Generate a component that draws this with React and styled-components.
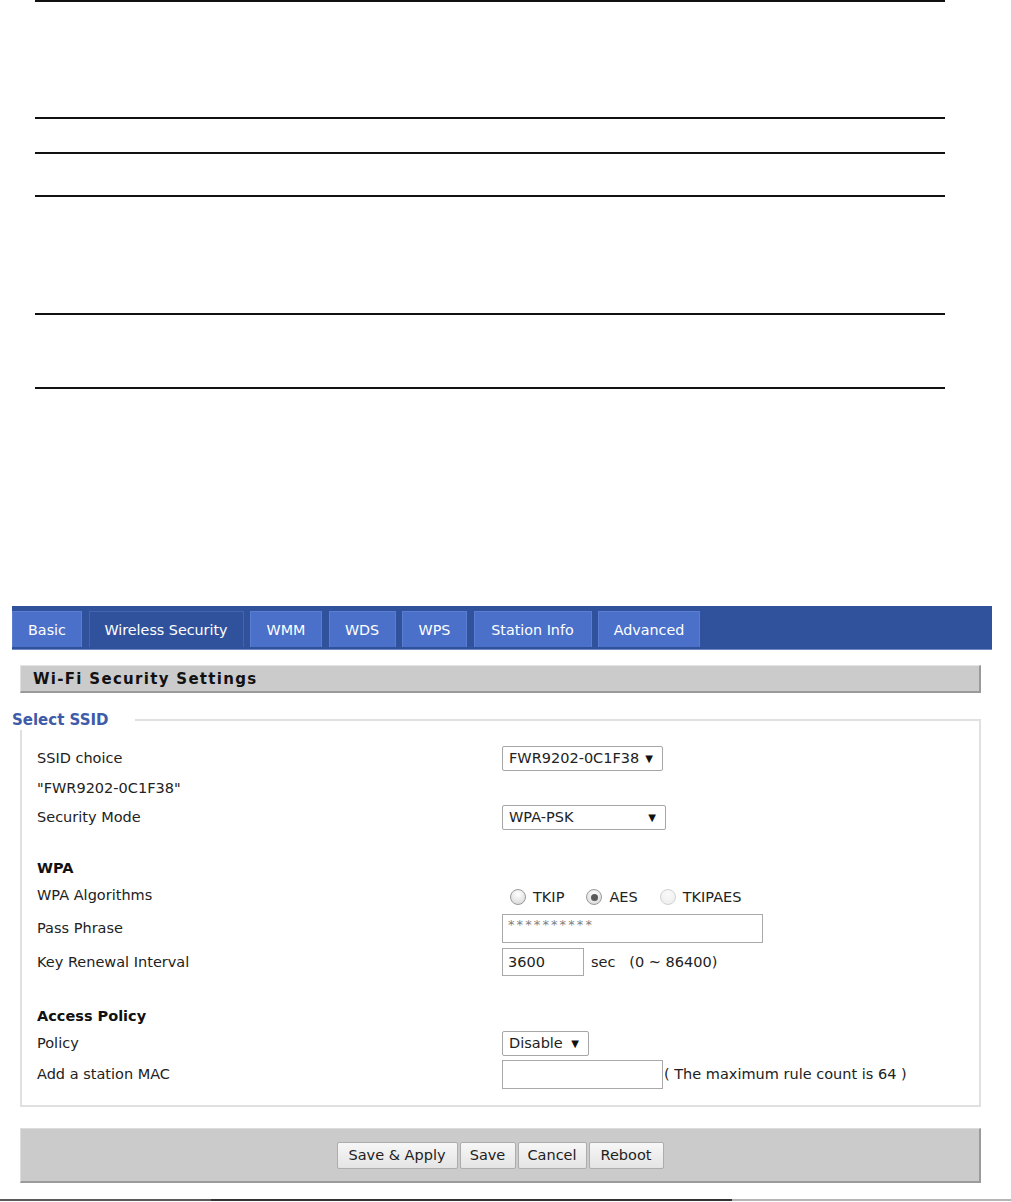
import React from 'react'
import styled, { createGlobalStyle } from 'styled-components'

const GlobalStyle = createGlobalStyle`
  body {
    margin: 0;
    background: #fff;
    font-family: "DejaVu Sans", Tahoma, sans-serif;
    color: #222;
  }
`

const Page = styled.div`
  width: 1011px;
  height: 1202px;
  overflow: hidden;
`

const Rules = styled.div`
  margin-left: 35px;
  width: 910px;
`

const Rule = styled.div`
  box-sizing: border-box;
  height: ${({ $h }) => $h}px;
  border-top: 2px solid #111;
  border-bottom: ${({ $last }) => ($last ? '2px solid #111' : 'none')};
`

const TabBar = styled.div`
  box-sizing: border-box;
  margin: 217px 0 0 12px;
  width: 980px;
  height: 44px;
  padding-top: 5px;
  background: #30529d;
  border-bottom: 1px solid #7187c2;
  display: flex;
  gap: 6.5px;
`

const Tab = styled.div`
  box-sizing: border-box;
  width: ${({ $w }) => $w}px;
  height: 36px;
  display: flex;
  align-items: center;
  justify-content: center;
  font-size: 14.3px;
  color: #fff;
  background: ${({ $active }) => ($active ? '#30529d' : '#4a70c9')};
  border: 1px solid ${({ $active }) => ($active ? '#4464b3' : '#5b7ed2')};
  border-bottom: none;
`

const SectionHead = styled.div`
  box-sizing: border-box;
  margin: 15px 0 0 20px;
  width: 961px;
  height: 28px;
  padding-left: 12px;
  display: flex;
  align-items: center;
  background: #cbcbcb;
  border-top: 1px solid #e4e4e4;
  border-left: 1px solid #e0e0e0;
  border-right: 2px solid #9a9a9a;
  border-bottom: 2px solid #9a9a9a;
  font-size: 15px;
  font-weight: bold;
  letter-spacing: 1.3px;
  color: #111;
`

const Group = styled.div`
  position: relative;
  box-sizing: border-box;
  margin: 26px 0 0 20px;
  width: 961px;
  padding: 23px 0 15px 15px;
  border: 2px solid #e0e0e0;
`

const Legend = styled.div`
  position: absolute;
  top: -11px;
  left: -10px;
  padding-right: 26px;
  background: #fff;
  line-height: 20px;
  font-size: 15px;
  font-weight: bold;
  color: #3e5ba8;
`

const Row = styled.div`
  display: flex;
  align-items: center;
  height: ${({ $h }) => $h}px;
  font-size: 14.5px;
`

const Heading = styled.div`
  display: flex;
  align-items: center;
  height: 24px;
  margin-top: 26px;
  font-size: 14.5px;
  font-weight: bold;
  color: #111;
`

const Label = styled.div`
  width: 465px;
  flex-shrink: 0;
`

const Value = styled.div`
  display: flex;
  align-items: center;
`

const SelectBox = styled.div`
  box-sizing: border-box;
  width: ${({ $w }) => $w}px;
  height: 25px;
  display: flex;
  align-items: center;
  justify-content: space-between;
  padding: 0 9px 0 6px;
  border: 1px solid #a6a6a6;
  border-radius: 2px;
  background: #fff;
  color: #222;
  font-size: 14.5px;
`

const Arrow = styled.span`
  font-size: 10px;
  color: #111;
`

const Field = styled.input`
  box-sizing: border-box;
  width: ${({ $w }) => $w}px;
  height: ${({ $h }) => $h}px;
  margin: 0;
  padding: ${({ $small }) => ($small ? '0 5px 8px' : '0 5px')};
  border: 1px solid #a9a9a9;
  border-radius: 0;
  background: #fff;
  font-family: "DejaVu Sans", Tahoma, sans-serif;
  font-size: ${({ $small }) => ($small ? '13px' : '14.5px')};
  letter-spacing: ${({ $small }) => ($small ? '2.1px' : 'normal')};
  color: ${({ $small }) => ($small ? '#808080' : '#222')};
  outline: none;
`

const Note = styled.span`
  margin-left: ${({ $ml }) => $ml || 0}px;
  white-space: pre;
`

const Radios = styled.div`
  display: flex;
  align-items: center;
  padding: 4px 0 0 8px;
`

const RadioItem = styled.label`
  display: inline-flex;
  align-items: center;
  gap: 7px;
  margin-right: 22px;
  font-size: 14.5px;
  color: #222;
`

const Dot = styled.span`
  position: relative;
  box-sizing: border-box;
  width: 16px;
  height: 16px;
  border-radius: 50%;
  border: 1px solid ${({ $off }) => ($off ? '#d2d2d2' : '#9a9a9a')};
  background: ${({ $off }) =>
    $off
      ? 'radial-gradient(circle at 50% 30%, #fafafa, #ececec)'
      : 'radial-gradient(circle at 50% 30%, #ffffff, #d4d4d4)'};

  &::after {
    content: '';
    display: ${({ $on }) => ($on ? 'block' : 'none')};
    position: absolute;
    left: 3.5px;
    top: 3.5px;
    width: 7px;
    height: 7px;
    border-radius: 50%;
    background: #5a5a5a;
  }
`

const ButtonBar = styled.div`
  box-sizing: border-box;
  margin: 21px 0 0 20px;
  width: 961px;
  height: 55px;
  display: flex;
  align-items: center;
  justify-content: center;
  gap: 2px;
  background: #cbcbcb;
  border-top: 1px solid #dcdcdc;
  border-left: 1px solid #dddddd;
  border-right: 2px solid #9b9b9b;
  border-bottom: 2px solid #9b9b9b;
`

const Button = styled.button`
  box-sizing: border-box;
  width: ${({ $w }) => $w}px;
  height: 27px;
  padding: 0;
  border: 1px solid #adadad;
  border-radius: 2px;
  background: linear-gradient(#f7f7f7, #e4e4e4);
  font-family: "DejaVu Sans", Tahoma, sans-serif;
  font-size: 14.5px;
  color: #222;
`

const BottomLine = styled.div`
  margin-top: 16px;
  display: flex;
  height: 2px;
`

const Seg = styled.div`
  width: ${({ $w }) => $w};
  background: ${({ $c }) => $c};
`

const tabs = [
  { name: 'Basic', w: 70 },
  { name: 'Wireless Security', w: 155, active: true },
  { name: 'WMM', w: 72 },
  { name: 'WDS', w: 67 },
  { name: 'WPS', w: 65 },
  { name: 'Station Info', w: 118 },
  { name: 'Advanced', w: 102 },
]

const App = () => {
  return (
    <Page>
      <GlobalStyle />
      <Rules>
        <Rule $h={117} />
        <Rule $h={35} />
        <Rule $h={43} />
        <Rule $h={118} />
        <Rule $h={76} $last />
      </Rules>

      <TabBar>
        {tabs.map((t) => (
          <Tab key={t.name} $w={t.w} $active={t.active}>
            {t.name}
          </Tab>
        ))}
      </TabBar>

      <SectionHead>Wi-Fi Security Settings</SectionHead>

      <Group>
        <Legend>Select SSID</Legend>
        <Row $h={28}>
          <Label>SSID choice</Label>
          <Value>
            <SelectBox $w={161}>
              FWR9202-0C1F38 <Arrow>▼</Arrow>
            </SelectBox>
          </Value>
        </Row>
        <Row $h={32}>
          <Label>"FWR9202-0C1F38"</Label>
        </Row>
        <Row $h={26}>
          <Label>Security Mode</Label>
          <Value>
            <SelectBox $w={164}>
              WPA-PSK <Arrow>▼</Arrow>
            </SelectBox>
          </Value>
        </Row>

        <Heading>WPA</Heading>
        <Row $h={30}>
          <Label>WPA Algorithms</Label>
          <Radios>
            <RadioItem>
              <Dot />
              TKIP
            </RadioItem>
            <RadioItem>
              <Dot $on />
              AES
            </RadioItem>
            <RadioItem>
              <Dot $off />
              TKIPAES
            </RadioItem>
          </Radios>
        </Row>
        <Row $h={36}>
          <Label>Pass Phrase</Label>
          <Value>
            <Field $w={261} $h={29} $small readOnly value="**********" />
          </Value>
        </Row>
        <Row $h={32}>
          <Label>Key Renewal Interval</Label>
          <Value>
            <Field $w={82} $h={28} readOnly value="3600" />
            <Note $ml={7}>{'sec   (0 ~ 86400)'}</Note>
          </Value>
        </Row>

        <Heading>Access Policy</Heading>
        <Row $h={30}>
          <Label>Policy</Label>
          <Value>
            <SelectBox $w={87}>
              Disable <Arrow>▼</Arrow>
            </SelectBox>
          </Value>
        </Row>
        <Row $h={32}>
          <Label>Add a station MAC</Label>
          <Value>
            <Field $w={161} $h={29} readOnly value="" />
            <Note $ml={1}>( The maximum rule count is 64 )</Note>
          </Value>
        </Row>
      </Group>

      <ButtonBar>
        <Button $w={121}>Save &amp; Apply</Button>
        <Button $w={56}>Save</Button>
        <Button $w={69}>Cancel</Button>
        <Button $w={75}>Reboot</Button>
      </ButtonBar>

      <BottomLine>
        <Seg $w="211px" $c="#5a5a5a" />
        <Seg $w="521px" $c="#333" />
        <Seg $w="279px" $c="#b5b5b5" />
      </BottomLine>
    </Page>
  )
}

export default App
